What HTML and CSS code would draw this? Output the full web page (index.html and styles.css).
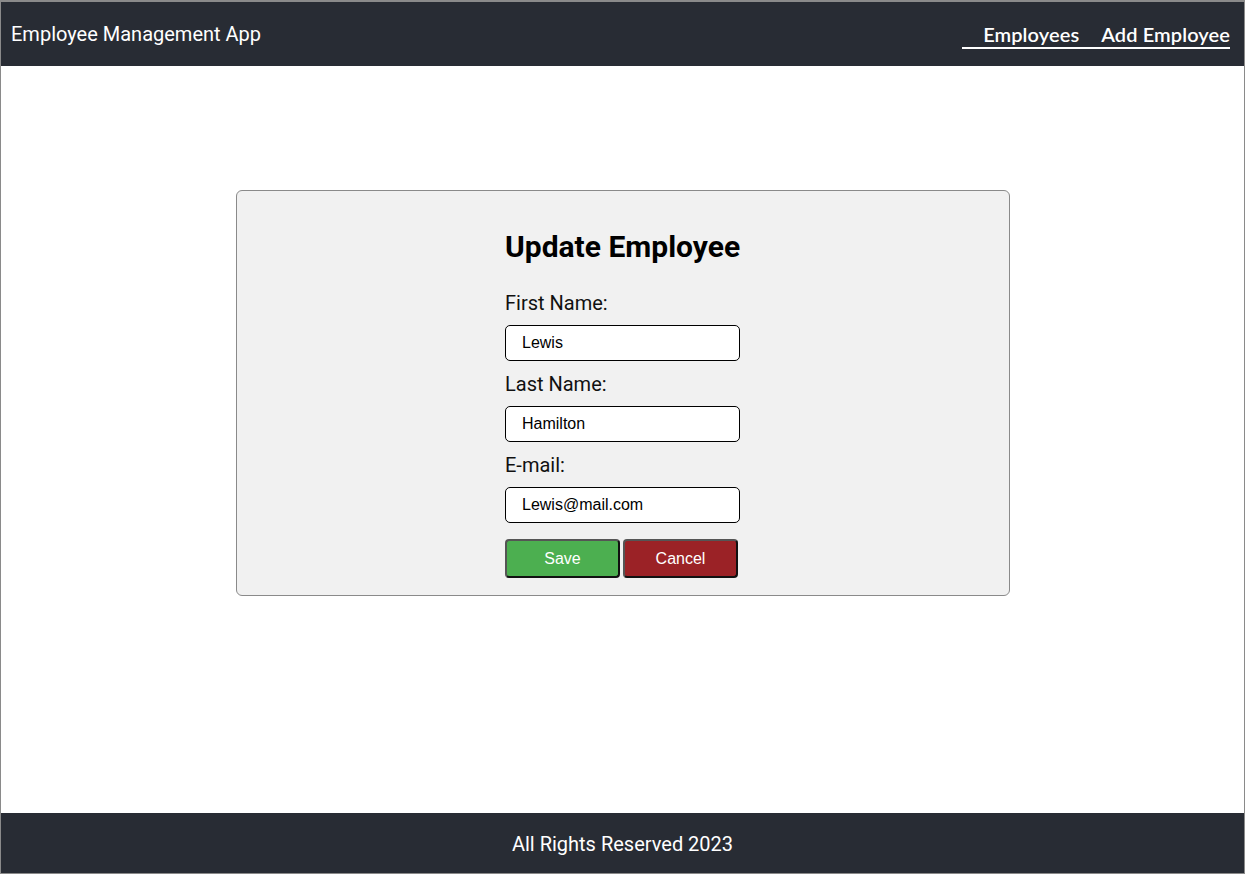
FILE: index.html
```
<!DOCTYPE html>
<html lang="en">
<head>
<meta charset="utf-8">
<title>Employee Management App</title>
<link rel="stylesheet" href="styles.css">
</head>
<body>
<div class="app">
  <header class="header">
    <div class="brand">Employee Management App</div>
    <nav>
      <ul class="nav-list">
        <li><a class="nav-link" href="#">Employees</a></li>
        <li><a class="nav-link" href="#">Add Employee</a></li>
      </ul>
    </nav>
  </header>
  <main class="main">
    <div class="card">
      <form class="form">
        <h2 class="title">Update Employee</h2>
        <label class="label">First Name:</label>
        <input class="input" type="text" value="Lewis">
        <label class="label">Last Name:</label>
        <input class="input" type="text" value="Hamilton">
        <label class="label">E-mail:</label>
        <input class="input" type="text" value="Lewis@mail.com">
        <div class="actions">
          <button type="button" class="btn btn-save">Save</button>
          <button type="button" class="btn btn-cancel">Cancel</button>
        </div>
      </form>
    </div>
  </main>
  <footer class="footer">All Rights Reserved 2023</footer>
</div>
</body>
</html>
```
FILE: styles.css
```
* { box-sizing: border-box; }
html, body { margin: 0; padding: 0; }
body { font-family: Roboto, "Liberation Sans", sans-serif; background: #fff; }

.app {
  height: 874px;
  border: 1px solid #8a8a8a;
  border-top-width: 2px;
  display: flex;
  flex-direction: column;
}

.header {
  height: 64px;
  flex: none;
  background: #282c34;
  display: flex;
  align-items: center;
  justify-content: space-between;
  padding: 0 14px 0 10px;
  color: #fff;
}
.brand { font-size: 20px; line-height: 24px; }

.nav-list {
  list-style: none;
  margin: 0;
  padding: 4px 0 3px 21px;
  display: flex;
  gap: 22px;
  border-bottom: 2px solid #fff;
}
.nav-link {
  font-family: Lato, "Open Sans", sans-serif;
  font-weight: 600;
  font-size: 20px;
  line-height: 20px;
  letter-spacing: 0.1px;
  color: #fff;
  text-decoration: none;
  display: block;
}

.main { flex: 1; display: flex; justify-content: center; align-items: flex-start; }

.card {
  margin-top: 124px;
  width: 774px;
  background: #f1f1f1;
  border: 1px solid #8a8a8a;
  border-radius: 6px;
  padding: 38px 0 17px;
  display: flex;
  justify-content: center;
}

.form { width: 235px; display: flex; flex-direction: column; }

.title {
  margin: 0 0 26px;
  font-size: 30px;
  line-height: 36px;
  font-weight: 700;
  color: #000;
  white-space: nowrap;
}

.label {
  font-size: 20px;
  line-height: 24px;
  color: #111;
  margin-bottom: 10px;
}
.input + .label { margin-top: 11px; }

.input {
  width: 235px;
  height: 36px;
  border: 1px solid #000;
  border-radius: 5px;
  padding: 0 16px;
  font-family: "Liberation Sans", Arial, sans-serif;
  font-size: 16px;
  color: #000;
  background: #fff;
}

.actions { display: flex; gap: 3px; margin-top: 16px; }
.btn {
  width: 115px;
  height: 39px;
  border: 2px solid;
  border-color: #555 #111 #111 #555;
  border-radius: 4px;
  font-family: "Liberation Sans", Arial, sans-serif;
  font-size: 16px;
  color: #fff;
  padding: 0;
}
.btn-save { background: #4caf50; }
.btn-cancel { background: #9b2226; }

.footer {
  height: 60px;
  flex: none;
  background: #282c34;
  color: #fff;
  font-size: 20px;
  padding-top: 2px;
  display: flex;
  align-items: center;
  justify-content: center;
}
```
